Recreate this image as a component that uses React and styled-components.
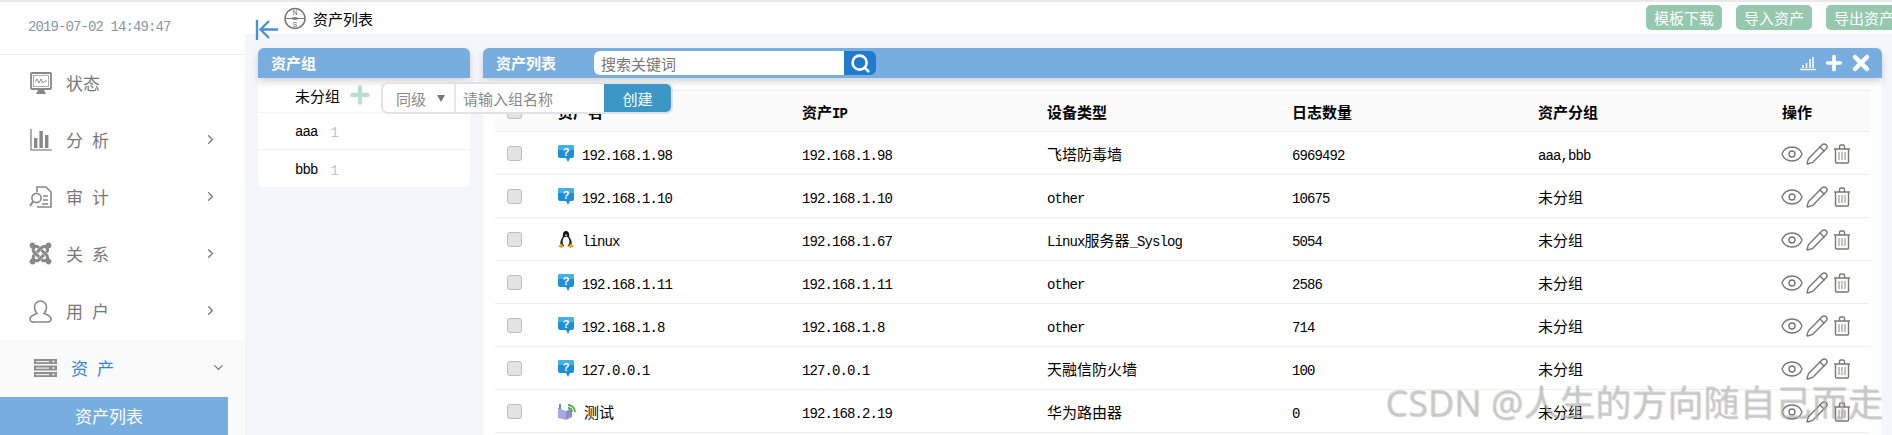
import React from "react";
import styled, { createGlobalStyle } from "styled-components";
import { Eye, Pencil, ChevronRight, ChevronDown, Search, Plus, X } from "lucide-react";
import { FaJoomla } from "react-icons/fa";

const cjk = `"Noto Sans CJK SC", "Noto Sans", sans-serif`;
const mono = `"Liberation Mono", "Noto Sans CJK SC", monospace`;

const GlobalStyle = createGlobalStyle`
  html, body { margin: 0; padding: 0; background: #fff; }
  body { font-family: ${cjk}; font-size: 15px; color: #000; }
  * { box-sizing: border-box; }
`;

// Icons drawn by hand, since the packages do not have these shapes
const MonitorIcon = () => (
  <svg width="22" height="22" viewBox="0 0 22 22">
    <rect x="1" y="1" width="20" height="16" rx="1" fill="none" stroke="#888" strokeWidth="1.8" />
    <rect x="3.5" y="3.5" width="15" height="11" fill="none" stroke="#999" strokeWidth="0.8" />
    <path d="M5 10l2-3 2 4 2-4 2 4 2-2h2" fill="none" stroke="#888" strokeWidth="0.9" />
    <path d="M6 22l2-4h6l2 4z" fill="#888" />
  </svg>
);

const BarsIcon = () => (
  <svg width="22" height="22" viewBox="0 0 22 22">
    <path d="M1 0v21h22" fill="none" stroke="#999" strokeWidth="1.6" />
    <rect x="4" y="9" width="3.4" height="10" fill="#888" />
    <rect x="9.4" y="2" width="3.4" height="17" fill="#888" />
    <rect x="15" y="6" width="3.4" height="13" fill="#888" />
  </svg>
);

const AuditIcon = () => (
  <svg width="23" height="22" viewBox="0 0 23 22">
    <path d="M8 6V1h9l5 5v15H8" fill="none" stroke="#888" strokeWidth="1.6" />
    <circle cx="7.5" cy="12" r="4.6" fill="#fff" stroke="#888" strokeWidth="1.6" />
    <path d="M4 15.5L1 20" stroke="#888" strokeWidth="2" />
    <path d="M14 10h5M14 14h5M13 18h6" stroke="#888" strokeWidth="1.4" />
  </svg>
);

const UserIcon = () => (
  <svg width="23" height="24" viewBox="0 0 23 24">
    <path
      d="M8 14.5c-1.500-1.500-2.500-3.500-2.500-6.500a6 6 0 0 1 12 0c0 3-1 5-2.500 6.500 3 1.200 7 2.500 7 5.500 0 2-1.500 3-4 3H5c-2.500 0-4-1-4-3 0-3 4-4.300 7-5.500z"
      fill="none"
      stroke="#888"
      strokeWidth="1.6"
    />
  </svg>
);

const ServerIcon = () => (
  <svg width="23" height="18" viewBox="0 0 23 18">
    {[0, 6.500, 13].map((y) => (
      <g key={y}>
        <rect x="0" y={y} width="23" height="5" fill="#8f8f8f" />
        <rect x="2" y={y + 2} width="13" height="1.200" fill="#eee" />
        <circle cx="19.500" cy={y + 2.500} r="1.100" fill="#eee" />
      </g>
    ))}
  </svg>
);

const CompassIcon = () => (
  <svg width="22" height="23" viewBox="0 0 22 23">
    <circle cx="11" cy="11.500" r="10" fill="#fff" stroke="#777" strokeWidth="1.500" />
    <path d="M1 11.500h20" stroke="#777" strokeWidth="1" />
    <path d="M5 11.500l6-1.500 6 1.500-6 1.500z" fill="#777" />
    <text x="11" y="8" textAnchor="middle" fontSize="6.500" fontFamily="Liberation Sans" fill="#555">N</text>
    <text x="11" y="20" textAnchor="middle" fontSize="6.500" fontFamily="Liberation Sans" fill="#555">S</text>
  </svg>
);

const BackIcon = () => (
  <svg width="24" height="22" viewBox="0 0 24 22">
    <path d="M2 1v20" stroke="#4a90d9" strokeWidth="2.400" />
    <path d="M23 10.500H6M14 2l-8.500 8.500L14 19" fill="none" stroke="#4a90d9" strokeWidth="2.400" />
  </svg>
);

const HelpIcon = () => (
  <svg width="16" height="17" viewBox="0 0 16 17">
    <path d="M2 0h12a2 2 0 0 1 2 2v9a2 2 0 0 1-2 2h-2l-2 4-2-4H2a2 2 0 0 1-2-2V2a2 2 0 0 1 2-2z" fill="#1c8fd6" />
    <path d="M0 2a2 2 0 0 1 2-2h12a2 2 0 0 1 2 2v3H0z" fill="#44b0ea" />
    <text x="8" y="11" textAnchor="middle" fontSize="11" fontWeight="700" fontFamily="Liberation Sans" fill="#fff">?</text>
  </svg>
);

const PenguinIcon = () => (
  <svg width="16" height="17" viewBox="0 0 16 17">
    <ellipse cx="8" cy="4.500" rx="3.200" ry="4.500" fill="#111" />
    <path d="M4.500 6C2.500 9 1.500 12 3 15h10c1.500-3 .5-6-1.500-9z" fill="#222" />
    <ellipse cx="8" cy="10.500" rx="3.400" ry="4.800" fill="#fff" />
    <path d="M6.500 4.200L8 3l1.500 1.200L8 5.500z" fill="#eeb422" />
    <path d="M0 15l3.500-2.500L6 16l-3 1zM16 15l-3.500-2.500L10 16l3 1z" fill="#e8a912" />
  </svg>
);

const RouterIcon = () => (
  <svg width="18" height="17" viewBox="0 0 18 17">
    <path d="M0 5l8 3v9l-8-2z" fill="#a9a7e0" />
    <path d="M8 8l6-3v9l-6 3z" fill="#8e8ccf" />
    <path d="M2 1v5" stroke="#3a62b8" strokeWidth="1.500" />
    <path d="M10 5a4 4 0 0 1 4 4M10 2a7 7 0 0 1 7 7" fill="none" stroke="#4fb343" strokeWidth="1.800" />
  </svg>
);

const TrashIcon = () => (
  <svg width="18" height="20" viewBox="0 0 18 20">
    <path d="M1 5h16M6.500 4.500V2.500A1.500 1.500 0 0 1 8 1h2a1.500 1.500 0 0 1 1.500 1.500v2" fill="none" stroke="#777" strokeWidth="1.400" />
    <path d="M2.500 5.500V18a1 1 0 0 0 1 1h11a1 1 0 0 0 1-1V5.500" fill="none" stroke="#777" strokeWidth="1.400" />
    <path d="M6 8v8M9 8v8M12 8v8" stroke="#a39a8f" strokeWidth="1.200" />
  </svg>
);

const MiniChartIcon = () => (
  <svg width="16" height="15" viewBox="0 0 16 15">
    <path d="M0 13.500h16" stroke="#fff" strokeWidth="1.500" />
    <path d="M3 12V9M6.500 12V7M10 12V3M13 12V1" stroke="#fff" strokeWidth="1.500" />
  </svg>
);

const Page = styled.div`
  position: relative;
  width: 1892px;
  height: 435px;
  overflow: hidden;
  display: flex;
  border-top: 2px solid #e9e9e9;
`;

const Sidebar = styled.aside`
  width: 245px;
  flex-shrink: 0;
  background: #fff;
  display: flex;
  flex-direction: column;
`;

const Clock = styled.div`
  height: 53px;
  padding: 18px 0 0 28px;
  border-bottom: 1px solid #eee;
  font-family: ${mono};
  font-size: 14px;
  letter-spacing: -0.9px;
  line-height: 15px;
  color: #8a96a3;
`;

const MenuItem = styled.div`
  height: 57px;
  display: flex;
  align-items: center;
  gap: 14px;
  padding: 0 ${(p) => (p.$open ? "19px" : "27px")} 2px ${(p) => (p.$open ? "34px" : "29px")};
  color: ${(p) => (p.$open ? "#2f86d9" : "#777")};
  font-size: 17px;
  svg { flex-shrink: 0; }
`;

const MenuIcon = styled.span`
  width: 23px;
  display: flex;
  justify-content: center;
  color: #888;
`;

const MenuLabel = styled.span`
  letter-spacing: ${(p) => (p.$spaced ? "9px" : "0")};
`;

const MenuArrow = styled.span`
  margin-left: auto;
  display: flex;
  color: #777;
`;

const MenuGroup = styled.div`
  flex: 1;
  background: #fafafa;
`;

const SubItem = styled.div`
  width: 228px;
  height: 38px;
  padding-right: 10px;
  background: #78ade0;
  color: #fff;
  font-size: 17px;
  line-height: 38px;
  text-align: center;
`;

const Main = styled.main`
  flex: 1;
  min-width: 0;
  background: #f4f6fb;
  display: flex;
  flex-direction: column;
  position: relative;
`;

const TopBar = styled.header`
  height: 33px;
  flex-shrink: 0;
  background: #fff;
  border-bottom: 1px solid #eef0f4;
  display: flex;
  align-items: flex-start;
  justify-content: space-between;
`;

const BackButton = styled.span`
  position: absolute;
  left: 10px;
  top: 17px;
  display: flex;
`;

const Crumb = styled.div`
  display: flex;
  align-items: center;
  gap: 7px;
  margin: 5px 0 0 39px;
  font-size: 15px;
  line-height: 23px;
`;

const TopActions = styled.div`
  display: flex;
  gap: 14px;
  margin: 3px -10px 0 0;
`;

const GreenButton = styled.button`
  width: 76px;
  height: 25px;
  padding: 0;
  border: 0;
  border-radius: 5px;
  background: #95c8ad;
  color: #fff;
  font-family: ${cjk};
  font-size: 15px;
  line-height: 25px;
`;

const Content = styled.div`
  flex: 1;
  display: flex;
  gap: 13px;
  padding: 13px 10px 0 13px;
  min-height: 0;
`;

const Panel = styled.section`
  display: flex;
  flex-direction: column;
  ${(p) => (p.$fill ? "flex: 1; min-width: 0;" : "width: 212px; flex-shrink: 0;")}
`;

const PanelHead = styled.div`
  position: relative;
  z-index: 1;
  height: 30px;
  flex-shrink: 0;
  display: flex;
  align-items: center;
  padding: 0 13px;
  background: #78ade0;
  border-radius: 6px 6px 0 0;
  box-shadow: 0 4px 7px rgba(0, 0, 0, 0.16);
  color: #fff;
`;

const PanelTitle = styled.h2`
  margin: 0;
  font-size: 15px;
  font-weight: 700;
  line-height: 30px;
`;

const SearchBox = styled.div`
  display: flex;
  margin-left: 38px;
  height: 24px;
`;

const SearchInput = styled.input`
  width: 250px;
  height: 24px;
  border: 0;
  outline: 0;
  padding: 0 7px;
  border-radius: 6px 0 0 6px;
  background: #fff;
  font-family: ${cjk};
  font-size: 15px;
  &::placeholder { color: #777; opacity: 1; }
`;

const SearchButton = styled.button`
  width: 32px;
  height: 24px;
  padding: 0;
  border: 0;
  border-radius: 0 6px 6px 0;
  background: #1f7bcd;
  color: #fff;
  display: flex;
  align-items: center;
  justify-content: center;
`;

const HeadTools = styled.div`
  margin: 0 -4px 0 auto;
  display: flex;
  align-items: center;
  gap: 4px;
  svg:first-child { margin-right: 3px; }
`;

const GroupList = styled.ul`
  margin: 0;
  padding: 0;
  list-style: none;
  background: #fff;
  border-radius: 0 0 6px 6px;
`;

const GroupRow = styled.li`
  height: ${(p) => (p.$first ? "35px" : "37px")};
  display: flex;
  align-items: center;
  padding-left: 37px;
  border-bottom: 1px solid #f3f3f3;
  &:last-child { border-bottom: 0; }
`;

const GroupName = styled.span`
  font-family: ${(p) => (p.$latin ? mono : cjk)};
  font-size: ${(p) => (p.$latin ? "14px" : "15px")};
  letter-spacing: ${(p) => (p.$latin ? "-0.9px" : "0")};
  margin-top: ${(p) => (p.$latin ? "2px" : "0")};
`;

const GroupCount = styled.span`
  margin: 4px 0 0 13px;
  font-family: ${mono};
  font-size: 14px;
  color: #c4c4c4;
`;

const GroupAdd = styled.span`
  display: flex;
  margin-left: 7px;
  color: #b9dfcf;
`;

const CreateForm = styled.div`
  position: absolute;
  z-index: 3;
  left: 136px;
  top: 80px;
  width: 292px;
  height: 32px;
  display: flex;
  background: #fff;
  border: 2px solid #e2e2e2;
  border-radius: 7px;
  overflow: hidden;
`;

const LevelSelect = styled.div`
  width: 73px;
  flex-shrink: 0;
  display: flex;
  align-items: center;
  padding: 0 9px 0 13px;
  justify-content: space-between;
  border-right: 2px solid #e8e8e8;
  color: #888;
  font-size: 15px;
  &::after {
    content: "";
    border-style: solid;
    border-width: 7px 4px 0;
    border-color: #777 transparent transparent;
  }
`;

const NameInput = styled.input`
  flex: 1;
  min-width: 0;
  border: 0;
  outline: 0;
  padding: 0 7px;
  font-family: ${cjk};
  font-size: 15px;
  &::placeholder { color: #888; opacity: 1; }
`;

const CreateButton = styled.button`
  width: 67px;
  flex-shrink: 0;
  border: 0;
  padding: 0;
  background: #3d97c6;
  color: #fff;
  font-family: ${cjk};
  font-size: 15px;
`;

const TableWrap = styled.div`
  flex: 1;
  background: #fff;
  padding: 12px 12px 0;
`;

const Row = styled.div`
  display: grid;
  grid-template-columns: 63px 244px 245px 245px 246px 244px 88px;
  align-items: center;
  height: ${(p) => (p.$head ? "42px" : "43px")};
  border-bottom: 1px solid #f0f0f0;
  ${(p) => p.$head && "background: #fbfbfb; border-top: 1px solid #eee; font-weight: 700;"}
`;

const Cell = styled.div`
  font-size: 15px;
  white-space: nowrap;
`;

const Latin = styled.span`
  font-family: ${mono};
  font-size: 14px;
  letter-spacing: -0.9px;
  font-weight: inherit;
`;

const Check = styled.span`
  display: block;
  width: 15px;
  height: 15px;
  margin-left: 12px;
  background: #e3e3e3;
  border: 1.500px solid #bdbdbd;
  border-radius: 3px;
`;

const NameCell = styled(Cell)`
  display: flex;
  align-items: center;
  gap: 8px;
  svg { flex-shrink: 0; }
`;

const ActionCell = styled.div`
  display: flex;
  align-items: center;
  gap: 1px;
  margin: 1px 0 0 -2px;
  color: #777;
  svg:last-child { margin-left: 3px; }
`;

const Watermark = styled.div`
  position: absolute;
  z-index: 5;
  left: 1385px;
  top: 378px;
  font-family: "Noto Sans", ${cjk};
  font-size: 36px;
  line-height: 46px;
  white-space: nowrap;
  color: rgba(190, 190, 190, 0.55);
  text-shadow: 1px 1px 1px rgba(120, 120, 120, 0.35);
`;

const menu = [
  { label: "状态", icon: <MonitorIcon /> },
  { label: "分析", icon: <BarsIcon />, spaced: true, arrow: true },
  { label: "审计", icon: <AuditIcon />, spaced: true, arrow: true },
  { label: "关系", icon: <FaJoomla size={25} />, spaced: true, arrow: true },
  { label: "用户", icon: <UserIcon />, spaced: true, arrow: true },
];

const assets = [
  { name: "192.168.1.98", icon: <HelpIcon />, ip: "192.168.1.98", type: "飞塔防毒墙", logs: "6969492", group: "aaa,bbb" },
  { name: "192.168.1.10", icon: <HelpIcon />, ip: "192.168.1.10", type: "other", logs: "10675", group: "未分组" },
  { name: "linux", icon: <PenguinIcon />, ip: "192.168.1.67", type: "Linux服务器_Syslog", logs: "5054", group: "未分组" },
  { name: "192.168.1.11", icon: <HelpIcon />, ip: "192.168.1.11", type: "other", logs: "2586", group: "未分组" },
  { name: "192.168.1.8", icon: <HelpIcon />, ip: "192.168.1.8", type: "other", logs: "714", group: "未分组" },
  { name: "127.0.0.1", icon: <HelpIcon />, ip: "127.0.0.1", type: "天融信防火墙", logs: "100", group: "未分组" },
  { name: "测试", icon: <RouterIcon />, ip: "192.168.2.19", type: "华为路由器", logs: "0", group: "未分组" },
];

// Splits mixed text so that latin runs get the narrow font
const Mixed = ({ text }) =>
  text.split(/([\x00-\x7f]+)/).map((part, i) =>
    /^[\x00-\x7f]+$/.test(part) ? <Latin key={i}>{part}</Latin> : part
  );

const App = () => {
  return (
    <Page>
      <GlobalStyle />
      <Sidebar>
        <Clock>2019-07-02 14:49:47</Clock>
        {menu.map((item) => (
          <MenuItem key={item.label}>
            <MenuIcon>{item.icon}</MenuIcon>
            <MenuLabel $spaced={item.spaced}>{item.label}</MenuLabel>
            {item.arrow && (
              <MenuArrow>
                <ChevronRight size={15} />
              </MenuArrow>
            )}
          </MenuItem>
        ))}
        <MenuGroup>
          <MenuItem $open>
            <MenuIcon>
              <ServerIcon />
            </MenuIcon>
            <MenuLabel $spaced>资产</MenuLabel>
            <MenuArrow>
              <ChevronDown size={15} />
            </MenuArrow>
          </MenuItem>
          <SubItem>资产列表</SubItem>
        </MenuGroup>
      </Sidebar>
      <Main>
        <TopBar>
          <Crumb>
            <CompassIcon />
            资产列表
          </Crumb>
          <TopActions>
            <GreenButton>模板下载</GreenButton>
            <GreenButton>导入资产</GreenButton>
            <GreenButton>导出资产</GreenButton>
          </TopActions>
        </TopBar>
        <BackButton>
          <BackIcon />
        </BackButton>
        <Content>
          <Panel>
            <PanelHead>
              <PanelTitle>资产组</PanelTitle>
            </PanelHead>
            <GroupList>
              <GroupRow $first>
                <GroupName>未分组</GroupName>
                <GroupAdd>
                  <Plus size={26} strokeWidth={4} />
                </GroupAdd>
              </GroupRow>
              <GroupRow>
                <GroupName $latin>aaa</GroupName>
                <GroupCount>1</GroupCount>
              </GroupRow>
              <GroupRow>
                <GroupName $latin>bbb</GroupName>
                <GroupCount>1</GroupCount>
              </GroupRow>
            </GroupList>
          </Panel>
          <CreateForm>
            <LevelSelect>同级</LevelSelect>
            <NameInput placeholder="请输入组名称" readOnly />
            <CreateButton>创建</CreateButton>
          </CreateForm>
          <Panel $fill>
            <PanelHead>
              <PanelTitle>资产列表</PanelTitle>
              <SearchBox>
                <SearchInput placeholder="搜索关键词" readOnly />
                <SearchButton>
                  <Search size={21} strokeWidth={3} />
                </SearchButton>
              </SearchBox>
              <HeadTools>
                <MiniChartIcon />
                <Plus size={22} strokeWidth={4} />
                <X size={24} strokeWidth={4.5} />
              </HeadTools>
            </PanelHead>
            <TableWrap>
              <Row $head>
                <Check />
                <Cell>资产名</Cell>
                <Cell>
                  <Mixed text="资产IP" />
                </Cell>
                <Cell>设备类型</Cell>
                <Cell>日志数量</Cell>
                <Cell>资产分组</Cell>
                <Cell>操作</Cell>
              </Row>
              {assets.map((asset) => (
                <Row key={asset.name}>
                  <Check />
                  <NameCell>
                    {asset.icon}
                    <span>
                      <Mixed text={asset.name} />
                    </span>
                  </NameCell>
                  <Cell>
                    <Latin>{asset.ip}</Latin>
                  </Cell>
                  <Cell>
                    <Mixed text={asset.type} />
                  </Cell>
                  <Cell>
                    <Latin>{asset.logs}</Latin>
                  </Cell>
                  <Cell>
                    <Mixed text={asset.group} />
                  </Cell>
                  <ActionCell>
                    <Eye size={24} strokeWidth={1.4} />
                    <Pencil size={24} strokeWidth={1.4} />
                    <TrashIcon />
                  </ActionCell>
                </Row>
              ))}
            </TableWrap>
          </Panel>
        </Content>
      </Main>
      <Watermark>CSDN @人生的方向随自己而走</Watermark>
    </Page>
  );
};

export default App;
